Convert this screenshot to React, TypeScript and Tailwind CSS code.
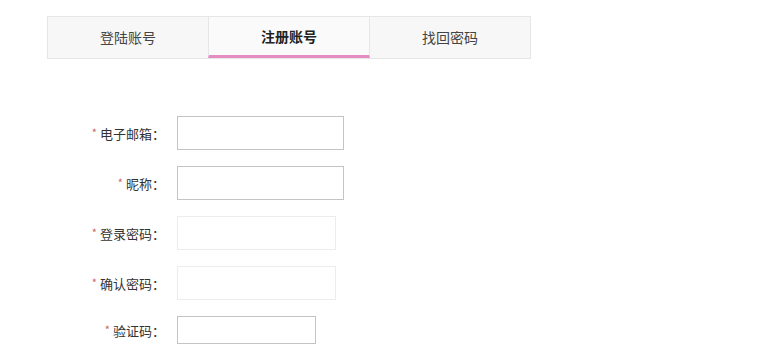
const tabs = ["登陆账号", "注册账号", "找回密码"];

const fields = [
  { label: "电子邮箱：", w: "w-[167px]", h: "h-[34px]", border: "border-[#c4c4c4]" },
  { label: "昵称：", w: "w-[167px]", h: "h-[34px]", border: "border-[#c4c4c4]" },
  { label: "登录密码：", w: "w-[159px]", h: "h-[34px]", border: "border-[#ececec]" },
  { label: "确认密码：", w: "w-[159px]", h: "h-[34px]", border: "border-[#ececec]" },
  { label: "验证码：", w: "w-[139px]", h: "h-[28px]", border: "border-[#c4c4c4]" },
];

const App = () => {
  return (
    <div
      className="w-[765px] h-[357px] bg-white overflow-hidden pt-[16px] pl-[47px]"
      style={{ fontFamily: '"Noto Sans CJK SC", "Liberation Sans", sans-serif' }}
    >
      <div className="flex w-[484px] h-[43px] border border-[#e6e6e6] bg-[#f7f7f7]">
        {tabs.map((t, i) => (
          <div
            key={t}
            className={
              i === 1
                ? "flex-1 flex items-center justify-center text-[14px] font-bold text-[#222] bg-[#fafafa] border-x border-[#e6e6e6] border-b-[3px] border-b-[#e58cc0]"
                : "flex-1 flex items-center justify-center text-[14px] text-[#444]"
            }
          >
            <span className={i === 1 ? "mt-[1px]" : "-mt-[1px]"}>{t}</span>
          </div>
        ))}
      </div>

      <div className="mt-[57px] flex flex-col gap-[16px]">
        {fields.map((f) => (
          <div key={f.label} className="flex items-center">
            <div className="w-[118px] text-right text-[13px] text-[#333] leading-none">
              <span className="text-[#c66] text-[11px] mr-[3px] align-top">*</span>
              {f.label}
            </div>
            <input className={`ml-[12px] ${f.w} ${f.h} border ${f.border} bg-white outline-none`} />
          </div>
        ))}
      </div>
    </div>
  );
};

export default App;
